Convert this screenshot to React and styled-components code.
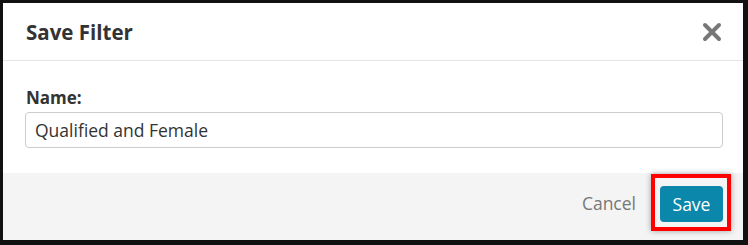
import styled, { createGlobalStyle } from "styled-components";

const GlobalStyle = createGlobalStyle`
  html, body {
    margin: 0;
    padding: 0;
    background: #fff;
  }
  body {
    font-family: "Open Sans", "Noto Sans", Arial, sans-serif;
  }
`;

const Frame = styled.div`
  width: 748px;
  height: 245px;
  box-sizing: border-box;
  border: 3px solid #111;
  border-right-width: 5px;
  border-bottom-width: 5px;
  overflow: hidden;
`;

const Modal = styled.div`
  height: 100%;
  display: flex;
  flex-direction: column;
  background: #fff;
  box-shadow: 1px 1px 3px rgba(0, 0, 0, 0.3);
`;

const Header = styled.div`
  height: 57px;
  flex: none;
  display: flex;
  align-items: center;
  justify-content: space-between;
  padding: 0 20px 0 23px;
  border-bottom: 1px solid #e5e5e5;
`;

const Title = styled.h2`
  margin: 0;
  font-size: 20.5px;
  font-weight: 700;
  color: #333;
`;

const Close = styled.button`
  border: 0;
  background: none;
  padding: 0;
  width: 22px;
  height: 22px;
  display: flex;
  align-items: center;
  justify-content: center;
  cursor: pointer;
`;

const Body = styled.div`
  flex: none;
  padding: 25px 20px 25px 22px;
`;

const Label = styled.label`
  display: block;
  font-size: 17px;
  font-weight: 700;
  color: #333;
  margin: 0 0 3px 1px;
  line-height: 23px;
`;

const Input = styled.input`
  display: block;
  width: 100%;
  box-sizing: border-box;
  height: 36px;
  padding: 0 9px;
  border: 1px solid #ccc;
  border-radius: 4px;
  font-family: inherit;
  font-size: 17.5px;
  color: #333;
  outline: none;
`;

const Footer = styled.div`
  flex: 1;
  display: flex;
  justify-content: flex-end;
  align-items: flex-start;
  padding: 1px 12px 0 0;
  background: #f4f4f4;
`;

const Cancel = styled.button`
  border: 0;
  background: none;
  font-family: inherit;
  font-size: 17.5px;
  color: #777;
  padding: 0 15px 0 0;
  height: 57px;
  cursor: pointer;
`;

const Highlight = styled.span`
  display: inline-flex;
  border: 4px solid #f00;
  padding: 8px 4px 5px 5px;
  box-shadow: 0 0 6px rgba(0, 0, 0, 0.35);
`;

const Primary = styled.button`
  border: 0;
  border-radius: 4px;
  background: #0a87aa;
  color: #fff;
  font-family: inherit;
  font-size: 17.5px;
  width: 63px;
  height: 36px;
  padding: 0;
  cursor: pointer;
`;

export default function App() {
  return (
    <>
      <GlobalStyle />
      <Frame>
        <Modal>
          <Header>
            <Title>Save Filter</Title>
            <Close aria-label="Close">
              <svg width="20" height="20" viewBox="0 0 20 20">
                <path
                  d="M3 3 L17 17 M17 3 L3 17"
                  stroke="#777"
                  strokeWidth="4"
                  strokeLinecap="round"
                />
              </svg>
            </Close>
          </Header>
          <Body>
            <Label htmlFor="filter-name">Name:</Label>
            <Input id="filter-name" defaultValue="Qualified and Female" />
          </Body>
          <Footer>
            <Cancel>Cancel</Cancel>
            <Highlight>
              <Primary>Save</Primary>
            </Highlight>
          </Footer>
        </Modal>
      </Frame>
    </>
  );
}
